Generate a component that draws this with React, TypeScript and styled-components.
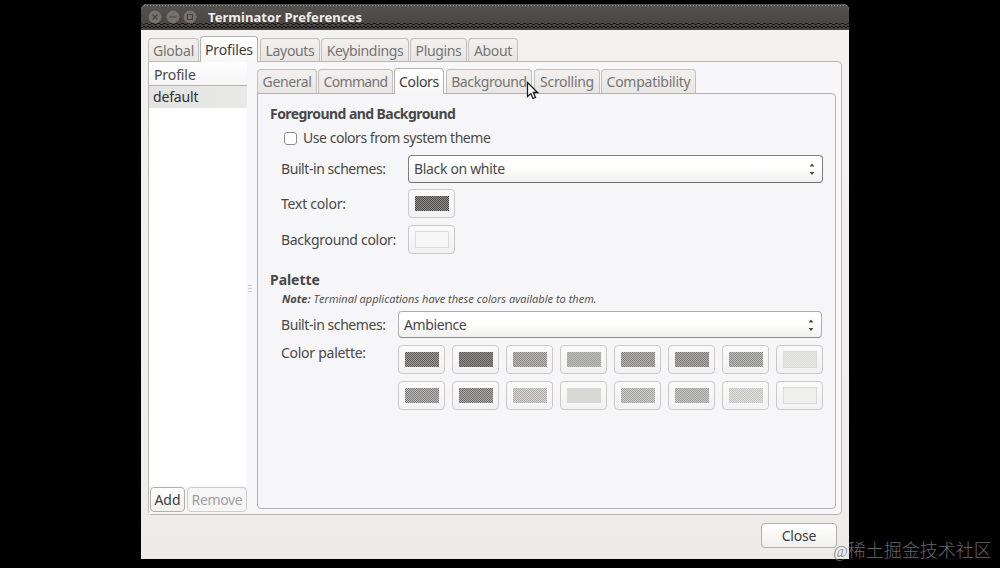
import React from 'react';
import styled, { createGlobalStyle, css } from 'styled-components';

const GlobalStyle = createGlobalStyle`
  *, *::before, *::after { box-sizing: border-box; }
  html, body { margin: 0; background: #000; }
  body { overflow: hidden; }
`;

const checks = (a: string, b: string) => css`
  background: repeating-conic-gradient(${a} 0 25%, ${b} 0 50%) 0 0 / 2px 2px;
`;

const Desktop = styled.div`
  position: relative;
  width: 1000px;
  height: 568px;
  padding: 4px 0 0 141px;
  background: #000;
  color: #4a4846;
  font: 14px/20px "Noto Sans", "Open Sans", sans-serif;
`;

const Window = styled.main`
  display: flex;
  flex-direction: column;
  width: 708px;
  height: 555px;
  border-radius: 6px 6px 0 0;
  overflow: hidden;
  background: linear-gradient(#f3f2f1, #f0efee 60%, #edecea);
`;

const TitleBar = styled.header`
  display: flex;
  align-items: center;
  flex: none;
  height: 26px;
  padding-left: 7px;
  background:
    repeating-conic-gradient(#111 0 25%, transparent 0 50%) 0 22px / 4px 2px repeat-x,
    repeating-conic-gradient(#1c1c1b 0 25%, transparent 0 50%) 1px 19px / 6px 2px repeat-x,
    repeating-linear-gradient(90deg, #908e8a 0 1px, transparent 1px 3px) 0 1px / 100% 1px no-repeat,
    linear-gradient(#555451, #4c4b49 50%, #444341);
`;

const WindowButtons = styled.div`
  display: flex;
  gap: 3.5px;
  width: 60px;
`;

const RoundButton = styled.svg`
  width: 14px;
  height: 14px;
`;

const Text = styled.span<{ $track?: number }>`
  white-space: nowrap;
  letter-spacing: ${(p) => p.$track ?? 0}px;
`;

const Title = styled(Text)`
  color: #f1efeb;
  font-size: 13px;
  font-weight: 700;
`;

const TabStrip = styled.nav<{ $inner?: boolean }>`
  display: flex;
  align-items: flex-end;
  flex: none;
  height: 31px;
  padding-left: ${(p) => (p.$inner ? 0 : 7)}px;
`;

const Tab = styled.div<{ $w: number; $gap: number; $active?: boolean; $tall?: boolean }>`
  display: flex;
  align-items: center;
  justify-content: center;
  flex: none;
  width: ${(p) => p.$w}px;
  height: ${(p) => (p.$tall ? 24 : 23)}px;
  margin-right: ${(p) => p.$gap}px;
  padding-top: 1px;
  border: 1px solid #c2c0bd;
  border-bottom: 0;
  border-radius: 4px 4px 0 0;
  background: linear-gradient(#f2f1f0, #e7e6e4);
  color: #777572;
  ${(p) =>
    p.$active &&
    css`
      height: 26px;
      margin-bottom: -1px;
      padding-top: 0;
      z-index: 1;
      border-color: #b5b3b0;
      background: linear-gradient(#fff, #f7f7f8);
      color: #3e3c3a;
    `}
`;

const OuterPanel = styled.section`
  display: flex;
  flex: none;
  width: 694px;
  height: 454px;
  margin-left: 7px;
  border: 1px solid #b9b7b4;
  border-radius: 0 4px 4px 4px;
  background: #f7f7f9;
`;

const Sidebar = styled.aside`
  display: flex;
  flex-direction: column;
  width: 98px;
  background: #fff;
`;

const ListHeader = styled.div`
  height: 24px;
  padding: 3px 0 0 5px;
  border-bottom: 1px solid #b7b5b2;
  background: linear-gradient(#fff, #f5f5f5);
`;

const ListRow = styled.div`
  height: 22px;
  padding: 1px 0 0 4px;
  background: linear-gradient(90deg, #e3e3e2, #e9e9e8);
  color: #32302e;
`;

const SidebarActions = styled.div`
  display: flex;
  gap: 2px;
  height: 28px;
  margin-top: auto;
  padding: 1px 0 2px 1px;
  background: #f7f7f9;
`;

const Button = styled.button<{ $w: number }>`
  display: flex;
  align-items: center;
  justify-content: center;
  flex: none;
  width: ${(p) => p.$w}px;
  height: 25px;
  padding: 0;
  border: 1px solid #b2b0ad;
  border-radius: 4px;
  background: linear-gradient(#fff, #f0f0ef);
  color: #3e3c3a;
  font: inherit;
  &:disabled {
    border-color: #d0cecc;
    background: #f6f6f6;
    color: #a19f9d;
  }
`;

const Handle = styled.div`
  display: flex;
  flex-direction: column;
  align-items: center;
  gap: 2px;
  width: 10px;
  padding-top: 223px;
  padding-right: 4px;
`;

const Grip = styled.i`
  width: 4px;
  height: 1px;
  background: #cfcfcf;
`;

const Inner = styled.div`
  display: flex;
  flex-direction: column;
  width: 579px;
`;

const InnerPanel = styled.section`
  height: 416px;
  padding: 10px 0 0 12px;
  border: 1px solid #b4b2af;
  border-radius: 0 4px 4px 4px;
  background: #f6f6f8;
`;

const Heading = styled.h2`
  height: 20px;
  margin: 0;
  font: inherit;
  font-weight: 700;
`;

const CheckRow = styled.label`
  display: flex;
  align-items: center;
  gap: 6px;
  height: 20px;
  margin: 4px 0 7px 14px;
`;

const CheckBox = styled.span`
  width: 13px;
  height: 13px;
  border: 1px solid #8f8d8b;
  border-radius: 3px;
  background: #fff;
`;

const Row = styled.div<{ $label: number; $h: number; $mb?: number }>`
  display: grid;
  grid-template-columns: ${(p) => p.$label}px auto;
  justify-content: start;
  align-items: center;
  height: ${(p) => p.$h}px;
  margin: 0 0 ${(p) => p.$mb ?? 0}px 11px;
`;

const Combo = styled.div<{ $w: number; $focus?: boolean }>`
  display: flex;
  align-items: center;
  justify-content: space-between;
  width: ${(p) => p.$w}px;
  height: ${(p) => (p.$focus ? 28 : 27)}px;
  padding: 0 6px 0 5px;
  border: 1px solid ${(p) => (p.$focus ? '#807e7b' : '#b0aeab')};
  border-bottom-color: ${(p) => (p.$focus ? '#716f6c' : '#8d8b88')};
  border-radius: 4px;
  background: linear-gradient(#fff 40%, #f1f1f0);
`;

const Note = styled.p`
  height: 14px;
  margin: 2px 0 5px 12px;
  font-size: 11px;
  line-height: 14px;
  font-style: italic;
  font-family: "Open Sans", "Noto Sans", sans-serif;
`;

const PaletteRow = styled.div`
  display: grid;
  grid-template-columns: 117px auto;
  justify-content: start;
  margin: 7px 0 0 11px;
`;

const PaletteLabel = styled(Text)`
  margin-top: -2px;
`;

const PaletteGrid = styled.div`
  display: grid;
  grid-template-columns: repeat(8, 47px);
  gap: 7px;
`;

const ColorButton = styled.div`
  display: flex;
  align-items: center;
  justify-content: center;
  width: 47px;
  height: 29px;
  border: 1px solid #cccac8;
  border-radius: 4px;
  background: linear-gradient(#fafafa, #f2f2f2);
`;

const Swatch = styled.div<{ $a: string; $b: string; $outlined?: boolean }>`
  width: 34px;
  height: 15px;
  ${(p) => checks(p.$a, p.$b)}
  ${(p) =>
    p.$outlined &&
    css`
      height: 17px;
      border: 1px solid #dadad8;
    `}
`;

const Footer = styled.footer`
  display: flex;
  justify-content: flex-end;
  padding: 8px 12px 0 0;
`;

const Cursor = styled.svg`
  position: absolute;
  left: 526px;
  top: 81px;
  width: 13px;
  height: 20px;
`;

const Watermark = styled.div`
  position: absolute;
  left: 833px;
  top: 539px;
  color: rgba(125, 125, 125, 0.85);
  font: 300 18px/20px "Noto Sans CJK SC", sans-serif;
  white-space: nowrap;
`;

const WatermarkAt = styled.span`
  font: italic 16px/20px "Liberation Serif", serif;
`;

type TabItem = { label: string; w: number; gap: number; track: number; active?: boolean };

const mainTabs: TabItem[] = [
  { label: 'Global', w: 51, gap: 1, track: -0.2 },
  { label: 'Profiles', w: 58, gap: 2, track: -0.15 },
  { label: 'Layouts', w: 60, gap: 1, track: -0.35 },
  { label: 'Keybindings', w: 88, gap: 1, track: -0.35 },
  { label: 'Plugins', w: 57, gap: 1, track: -0.35 },
  { label: 'About', w: 50, gap: 0, track: -0.3 },
];
mainTabs[1].active = true;

const profileTabs: TabItem[] = [
  { label: 'General', w: 60, gap: 1, track: -0.4 },
  { label: 'Command', w: 75, gap: 1, track: -0.65 },
  { label: 'Colors', w: 50, gap: 2, track: -0.35, active: true },
  { label: 'Background', w: 86, gap: 2, track: -0.4 },
  { label: 'Scrolling', w: 66, gap: 1, track: -0.3 },
  { label: 'Compatibility', w: 95, gap: 0, track: -0.25 },
];

const palette: { a: string; b: string; outlined?: boolean }[] = [
  { a: '#5c5a59', b: '#a3a1a0' },
  { a: '#625e5b', b: '#8f8b89' },
  { a: '#8b8a88', b: '#bbbab8' },
  { a: '#a3a3a1', b: '#bcbcba' },
  { a: '#83817f', b: '#b9b7b5' },
  { a: '#807e7d', b: '#aeacab' },
  { a: '#898988', b: '#bfbfbe' },
  { a: '#dbdbd8', b: '#e8e8e6', outlined: true },
  { a: '#807f7d', b: '#b8b7b6' },
  { a: '#757371', b: '#a9a7a6' },
  { a: '#adacaa', b: '#d6d5d3' },
  { a: '#d6d6d2', b: '#dadad7' },
  { a: '#a4a4a2', b: '#cdcdcb' },
  { a: '#a1a19f', b: '#c4c4c2' },
  { a: '#c3c3c0', b: '#dfdfdc' },
  { a: '#efefec', b: '#f0f0ee', outlined: true },
];

const Tabs = ({ items, inner }: { items: TabItem[]; inner?: boolean }) => (
  <TabStrip $inner={inner}>
    {items.map((t) => (
      <Tab key={t.label} $w={t.w} $gap={t.gap} $active={t.active} $tall={inner}>
        <Text $track={t.track}>{t.label}</Text>
      </Tab>
    ))}
  </TabStrip>
);

const Arrows = () => (
  <svg width="8" height="14" viewBox="0 0 8 14" fill="#4a4846">
    <path d="M4 1.6 6.4 4.6H1.6zM4 12.9 6.4 9.900H1.6z" />
  </svg>
);

const WindowButton = ({ glyph }: { glyph: string }) => (
  <RoundButton viewBox="0 0 14 14">
    <circle cx="7" cy="7" r="6" fill="#77726e" stroke="#8a8580" strokeDasharray="1 1" />
    <path d={glyph} fill="none" stroke="#45423f" strokeWidth="1.2" />
  </RoundButton>
);

export default function App() {
  return (
    <>
      <GlobalStyle />
      <Desktop>
        <Window>
          <TitleBar>
            <WindowButtons>
              <WindowButton glyph="M4.5 4.5l5 5M9.5 4.5l-5 5" />
              <WindowButton glyph="M3.5 7h7" />
              <WindowButton glyph="M4.5 4.5h5v5h-5z" />
            </WindowButtons>
            <Title $track={0.05}>Terminator Preferences</Title>
          </TitleBar>
          <Tabs items={mainTabs} />
          <OuterPanel>
            <Sidebar>
              <ListHeader>
                <Text $track={-0.1}>Profile</Text>
              </ListHeader>
              <ListRow>
                <Text $track={-0.15}>default</Text>
              </ListRow>
              <SidebarActions>
                <Button $w={35}>
                  <Text>Add</Text>
                </Button>
                <Button $w={60} disabled>
                  <Text $track={-0.35}>Remove</Text>
                </Button>
              </SidebarActions>
            </Sidebar>
            <Handle>
              <Grip />
              <Grip />
              <Grip />
            </Handle>
            <Inner>
              <Tabs items={profileTabs} inner />
              <InnerPanel>
                <Heading>
                  <Text $track={-0.56}>Foreground and Background</Text>
                </Heading>
                <CheckRow>
                  <CheckBox />
                  <Text $track={-0.46}>Use colors from system theme</Text>
                </CheckRow>
                <Row $label={127} $h={28} $mb={6}>
                  <Text $track={-0.43}>Built-in schemes:</Text>
                  <Combo $w={415} $focus>
                    <Text $track={-0.33}>Black on white</Text>
                    <Arrows />
                  </Combo>
                </Row>
                <Row $label={127} $h={29} $mb={7}>
                  <Text $track={-0.23}>Text color:</Text>
                  <ColorButton>
                    <Swatch $a="#4c4b4a" $b="#92908f" />
                  </ColorButton>
                </Row>
                <Row $label={127} $h={29} $mb={16}>
                  <Text $track={-0.3}>Background color:</Text>
                  <ColorButton>
                    <Swatch $a="#f8f8f8" $b="#f5f5f5" $outlined />
                  </ColorButton>
                </Row>
                <Heading>
                  <Text $track={-0.05}>Palette</Text>
                </Heading>
                <Note>
                  <Text $track={0.02}>
                    <b>Note:</b> Terminal applications have these colors available to them.
                  </Text>
                </Note>
                <Row $label={117} $h={27}>
                  <Text $track={-0.43}>Built-in schemes:</Text>
                  <Combo $w={424}>
                    <Text $track={-0.4}>Ambience</Text>
                    <Arrows />
                  </Combo>
                </Row>
                <PaletteRow>
                  <PaletteLabel $track={-0.27}>Color palette:</PaletteLabel>
                  <PaletteGrid>
                    {palette.map((c, i) => (
                      <ColorButton key={i}>
                        <Swatch $a={c.a} $b={c.b} $outlined={c.outlined} />
                      </ColorButton>
                    ))}
                  </PaletteGrid>
                </PaletteRow>
              </InnerPanel>
            </Inner>
          </OuterPanel>
          <Footer>
            <Button $w={76}>
              <Text $track={-0.2}>Close</Text>
            </Button>
          </Footer>
        </Window>
        <Cursor viewBox="0 0 13 20">
          <path
            d="M1.5 1.5v14l3.3-3 2.200 5 2.500-1.100-2.200-4.900h4.200z"
            fill="#fff"
            stroke="#1c1c1c"
            strokeWidth="1.3"
          />
        </Cursor>
        <Watermark>
          <WatermarkAt>@</WatermarkAt>稀土掘金技术社区
        </Watermark>
      </Desktop>
    </>
  );
}
